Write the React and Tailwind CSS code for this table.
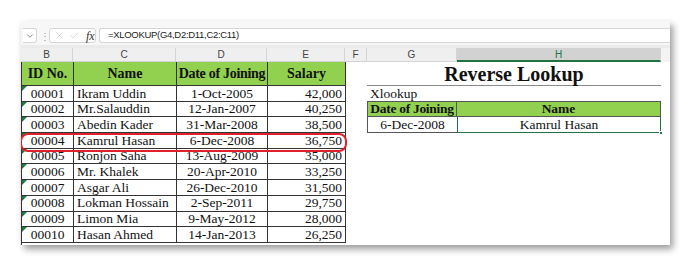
import { Check, ChevronDown, X } from "lucide-react";

const rows = [
  ["00001", "Ikram Uddin", "1-Oct-2005", "42,000"],
  ["00002", "Mr.Salauddin", "12-Jan-2007", "40,250"],
  ["00003", "Abedin Kader", "31-Mar-2008", "38,500"],
  ["00004", "Kamrul Hasan", "6-Dec-2008", "36,750"],
  ["00005", "Ronjon Saha", "13-Aug-2009", "35,000"],
  ["00006", "Mr. Khalek", "20-Apr-2010", "33,250"],
  ["00007", "Asgar Ali", "26-Dec-2010", "31,500"],
  ["00008", "Lokman Hossain", "2-Sep-2011", "29,750"],
  ["00009", "Limon Mia", "9-May-2012", "28,000"],
  ["00010", "Hasan Ahmed", "14-Jan-2013", "26,250"],
];

const serif = "font-['Liberation_Serif',serif]";

function ColHead({ label, w, active }) {
  return (
    <div
      className={`${w} h-full flex items-center justify-center border-r border-[#d4d4d4] text-[10px] font-['Liberation_Sans',sans-serif] ${
        active
          ? "bg-[#d2d2d2] border-b-2 border-b-[#217346] text-[#217346]"
          : "border-b border-b-[#d4d4d4] text-[#444]"
      }`}
    >
      {label}
    </div>
  );
}

export default function App() {
  return (
    <div className="w-[690px] h-[266px] bg-white relative overflow-hidden">
      <div className="absolute left-[21px] top-[21px] w-[649px] h-[224px] bg-white flex flex-col shadow-[3px_4px_7px_rgba(0,0,0,0.4)] overflow-hidden">
        {/* formula bar */}
        <div className="h-[24px] bg-[#f7f7f7] flex items-end pb-[2px] pl-[2px] gap-[3px]">
          <div className="w-[14px] h-[15px] bg-white border border-l-0 border-[#d6d6d6] rounded-r-[3px] flex items-center justify-center">
            <ChevronDown size={10} strokeWidth={1.6} color="#555" />
          </div>
          <div className="w-[6px] text-[#999] text-[10px] leading-none flex items-center h-[15px]">⋮</div>
          <div className="w-[47px] h-[15px] bg-white border border-[#d6d6d6] rounded-[3px] flex items-center gap-[4px] pl-[4px]">
            <X size={11} strokeWidth={1.2} color="#b5b5b5" />
            <Check size={11} strokeWidth={1.2} color="#b5b5b5" />
            <span className="font-['Liberation_Serif',serif] italic text-[12px] leading-none text-[#333] ml-[2px]">fx</span>
          </div>
          <div className="flex-1 h-[15px] bg-white border border-[#d6d6d6] rounded-l-[3px] border-r-0 flex items-center pl-[8px] text-[9.5px] tracking-[-0.3px] text-[#222] font-['Liberation_Sans',sans-serif]">
            =XLOOKUP(G4,D2:D11,C2:C11)
          </div>
        </div>
        <div className="h-[3px] bg-[#ebebeb]" />
        {/* column headers */}
        <div className="h-[14px] flex bg-[#efefef]">
          <ColHead label="B" w="w-[52px]" />
          <ColHead label="C" w="w-[103px]" />
          <ColHead label="D" w="w-[91px]" />
          <ColHead label="E" w="w-[78px]" />
          <ColHead label="F" w="w-[22px]" />
          <ColHead label="G" w="w-[90px]" />
          <ColHead label="H" w="w-[204px]" active />
          <div className="flex-1 bg-[#f3f3f3]" />
        </div>

        {/* sheet body */}
        <div className={`flex flex-1 ${serif} text-[#111]`}>
          {/* main table */}
          <div className="w-[325px] flex flex-col border-l border-[#333]">
            <div className="h-[24px] flex bg-[#92d050] border-b border-[#333] font-bold text-[14px] whitespace-nowrap">
              <div className="w-[52px] border-r border-[#333] flex items-center justify-center">ID No.</div>
              <div className="w-[103px] border-r border-[#333] flex items-center justify-center">Name</div>
              <div className="w-[91px] border-r border-[#333] flex items-center justify-center tracking-[-0.3px]">Date of Joining</div>
              <div className="w-[78px] border-r border-[#333] flex items-center justify-center">Salary</div>
            </div>
            {rows.map((r) => (
              <div key={r[0]} className="h-[15.7px] flex border-b border-[#333] text-[13.5px] leading-none whitespace-nowrap">
                <div className="w-[52px] border-r border-[#333] flex items-center justify-center relative">
                  <span className="absolute left-0 top-0 w-0 h-0 border-t-[5px] border-t-[#1e7a3e] border-r-[5px] border-r-transparent" />
                  {r[0]}
                </div>
                <div className="w-[103px] border-r border-[#333] flex items-center pl-[3px]">{r[1]}</div>
                <div className="w-[91px] border-r border-[#333] flex items-center justify-center">{r[2]}</div>
                <div className="w-[78px] border-r border-[#333] flex items-center justify-end pr-[3px]">{r[3]}</div>
              </div>
            ))}
          </div>

          <div className="w-[21px]" />

          {/* reverse lookup */}
          <div className="w-[294px] flex flex-col">
            <div className="h-[24px] border-b border-[#8a8a8a] flex items-center justify-center font-bold text-[20px] leading-none">
              Reverse Lookup
            </div>
            <div className="h-[15px] flex items-center pl-[3px] text-[13.5px] leading-none">Xlookup</div>
            <div className="h-[16px] flex bg-[#92d050] border border-[#555] font-bold text-[13.5px] leading-none whitespace-nowrap">
              <div className="w-[89px] border-r border-[#555] flex items-center justify-center tracking-[-0.3px]">Date of Joining</div>
              <div className="flex-1 flex items-center justify-center">Name</div>
            </div>
            <div className="h-[16px] flex text-[13.5px] leading-none">
              <div className="w-[90px] border-l border-b border-[#555] flex items-center justify-center">6-Dec-2008</div>
              <div className="flex-1 border border-t-0 border-[#217346] flex items-center justify-center relative">
                Kamrul Hasan
                <span className="absolute right-[-3px] bottom-[-3px] w-[4px] h-[4px] bg-[#217346] border border-white" />
              </div>
            </div>
          </div>
          <div className="flex-1" />
        </div>

        {/* highlight around row 4 */}
        <div className="absolute left-[-1px] top-[112px] w-[327px] h-[19px] border-2 border-[#e0202a] rounded-[8px]" />
      </div>
    </div>
  );
}
